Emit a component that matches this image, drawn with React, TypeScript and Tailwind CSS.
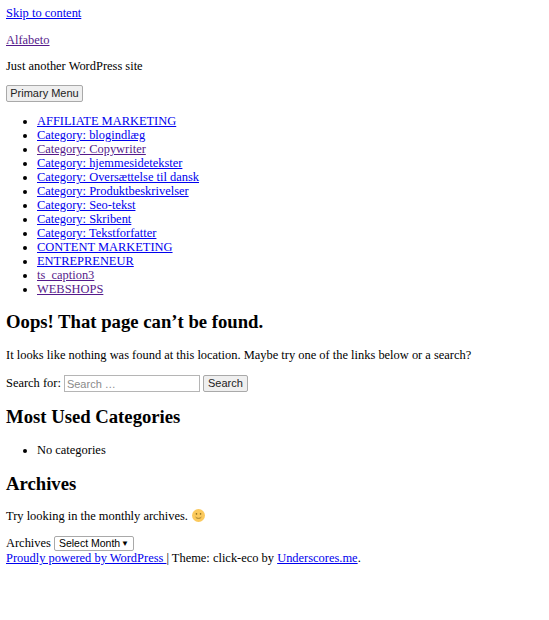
const links: [string, boolean][] = [
  ['AFFILIATE MARKETING', false],
  ['Category: blogindlæg', false],
  ['Category: Copywriter', true],
  ['Category: hjemmesidetekster', false],
  ['Category: Oversættelse til dansk', false],
  ['Category: Produktbeskrivelser', false],
  ['Category: Seo-tekst', false],
  ['Category: Skribent', false],
  ['Category: Tekstforfatter', false],
  ['CONTENT MARKETING', false],
  ['ENTREPRENEUR', false],
  ['ts_caption3', true],
  ['WEBSHOPS', true],
];

const bodyFont = "font-['Liberation_Serif',serif]";
const btn = "rounded-[2px] border border-[#a9a9a9] bg-[#efefef] text-[11px] leading-[13px] text-[#222] font-['Liberation_Sans',sans-serif]";

export default function App() {
  return (
    <div className={`${bodyFont} min-h-[620px] bg-white px-[6px] pt-[6px] text-[12.45px] leading-[15px] text-black`}>
      <a href="#" className="text-[#0000ee] underline">Skip to content</a>
      <p className="mt-[12px]"><a href="#" className="text-[#551a8b] underline">Alfabeto</a></p>
      <p className="mt-[11px]">Just another WordPress site</p>
      <button className={`${btn} mt-[11px] block h-[17px] w-[77px]`}>Primary Menu</button>
      <ul className="mt-[12px] list-disc pl-[31px]">
        {links.map(([label, visited]) => (
          <li key={label} className="h-[14px]">
            <a href="#" className={visited ? 'text-[#551a8b] underline' : 'text-[#0000ee] underline'}>{label}</a>
          </li>
        ))}
      </ul>
      <h1 className="mt-[15px] text-[18.7px] font-bold leading-[22px]">Oops! That page can’t be found.</h1>
      <p className="mt-[15px]">It looks like nothing was found at this location. Maybe try one of the links below or a search?</p>
      <div className="mt-[12px] flex items-center">
        <span>Search for:</span>
        <input
          placeholder="Search …"
          className="ml-[3px] h-[17px] w-[136px] border border-[#b5b5b5] px-[2px] text-[11px] text-black placeholder:text-[#8a8a8a] font-['Liberation_Sans',sans-serif]"
        />
        <button className={`${btn} ml-[3px] h-[17px] w-[45px]`}>Search</button>
      </div>
      <h2 className="mt-[14px] text-[18.7px] font-bold leading-[22px]">Most Used Categories</h2>
      <ul className="mt-[15px] list-disc pl-[31px]">
        <li>No categories</li>
      </ul>
      <h2 className="mt-[15px] text-[18.7px] font-bold leading-[22px]">Archives</h2>
      <p className="mt-[14px] flex items-center">
        Try looking in the monthly archives.
        <svg viewBox="0 0 16 16" className="ml-[4px] mb-[2px] size-[13px]">
          <circle cx="8" cy="8" r="8" fill="#fbc95c" />
          <circle cx="5.5" cy="6" r="1" fill="#8a6d1d" />
          <circle cx="10.5" cy="6" r="1" fill="#8a6d1d" />
          <path d="M4.5 10c1 2 6 2 7 0" fill="none" stroke="#8a6d1d" strokeWidth="1" />
        </svg>
      </p>
      <div className="mt-[12px] flex items-center">
        <span>Archives</span>
        <div className="ml-[3px] flex h-[15px] w-[80px] items-center justify-between whitespace-nowrap rounded-[2px] border border-[#a9a9a9] pl-[4px] pr-[4px] text-[10.5px] font-['Liberation_Sans',sans-serif]">
          Select Month <span className="text-[8px]">▼</span>
        </div>
      </div>
      <p>
        <a href="#" className="text-[#0000ee] underline">Proudly powered by WordPress </a>
        <span> | Theme: click-eco by </span>
        <a href="#" className="text-[#0000ee] underline">Underscores.me</a>.
      </p>
    </div>
  );
}
